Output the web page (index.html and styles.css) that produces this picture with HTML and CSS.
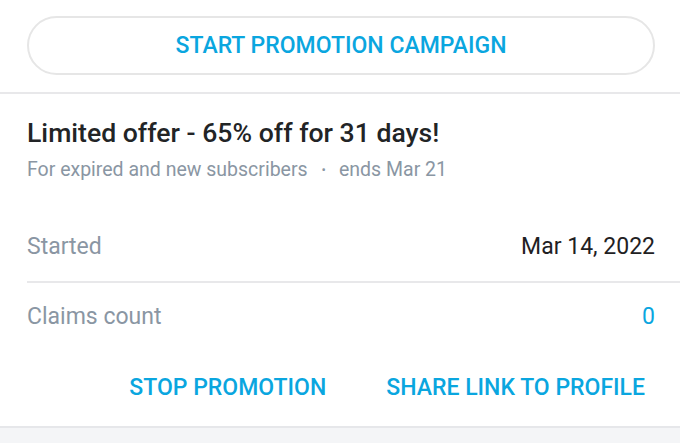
FILE: index.html
```html
<!DOCTYPE html>
<html>
<head>
<meta charset="utf-8">
<link rel="stylesheet" href="styles.css">
</head>
<body>
<div class="top">
  <button class="campaign-btn">START PROMOTION CAMPAIGN</button>
</div>
<div class="card">
  <div class="head">
    <div class="title">Limited offer - 65% off for 31 days!</div>
    <div class="sub"><span>For expired and new subscribers</span><span class="dot">•</span><span>ends Mar 21</span></div>
  </div>
  <div class="rows">
    <div class="row first"><span class="label">Started</span><span class="value">Mar 14, 2022</span></div>
    <div class="row"><span class="label">Claims count</span><span class="value blue">0</span></div>
  </div>
  <div class="actions">
    <span class="action">STOP PROMOTION</span>
    <span class="action">SHARE LINK TO PROFILE</span>
  </div>
</div>
<div class="footer"></div>
</body>
</html>
```
FILE: styles.css
```css
* { box-sizing: border-box; }
html, body { margin: 0; padding: 0; background: #fff; }
body { font-family: Roboto, "Noto Sans", sans-serif; width: 680px; height: 443px; overflow: hidden; display: flex; flex-direction: column; }
.top { padding: 16px 25px 17px 27px; border-bottom: 2px solid #e8e8ea; }
.campaign-btn {
  display: flex; align-items: center; justify-content: center;
  width: 628px; height: 59px; border: 2px solid #e6e6e6; border-radius: 30px;
  background: #fff; color: #0aa6df; font-family: Roboto, sans-serif; font-weight: 500;
  font-size: 23px; letter-spacing: 0; padding: 0;
}
.card { padding: 0 0 0 27px; }
.head { padding: 23px 25px 0 0; }
.title { font-size: 26.6px; font-weight: 500; color: #222426; line-height: 32px; }
.sub { margin-top: 8px; font-size: 19.5px; color: #8a96a3; line-height: 26px; display: flex; align-items: center; }
.dot { margin: 0 13px 0 14px; font-size: 13px; }
.rows { margin-top: 28px; }
.row { display: flex; justify-content: space-between; align-items: center; height: 66px; padding-right: 25px; font-size: 23px; }
.row.first { border-bottom: 2px solid #e8e8ea; height: 72px; }
.label { color: #8a96a3; }
.value { color: #1f2123; }
.blue { color: #0aa6df; }
.actions { display: flex; justify-content: flex-end; gap: 60px; padding: 0 35px 0 0; height: 77px; align-items: center; }
.action { color: #0aa6df; font-weight: 500; font-size: 23px; }
.footer { flex: 1; border-top: 2px solid #e6e7ea; background: #f4f5f7; }
```
